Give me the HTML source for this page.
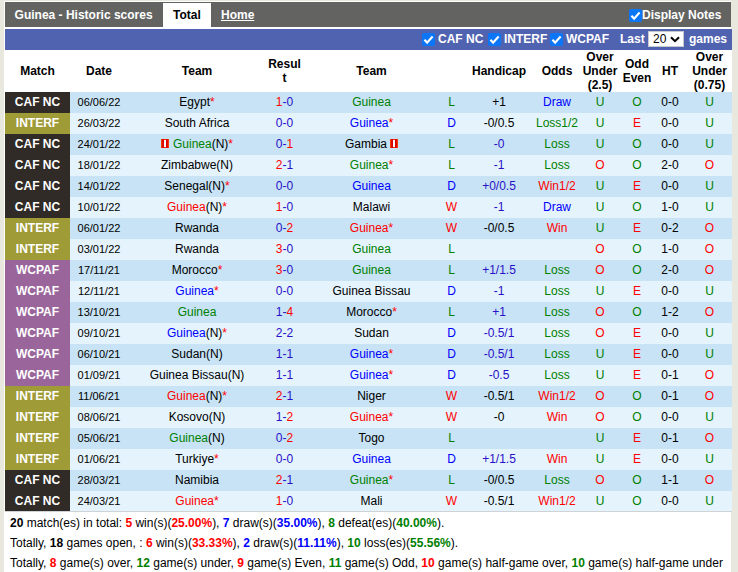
<!DOCTYPE html>
<html><head><meta charset="utf-8"><style>
html,body{margin:0;padding:0;}
body{width:738px;height:572px;overflow:hidden;background:#e8e8df;font-family:"Liberation Sans",sans-serif;font-size:12px;color:#000;position:relative;}
#wrap{position:absolute;left:4px;top:1px;width:727px;height:580px;background:#fff;}
#tbar{position:absolute;left:5px;top:2px;width:726px;height:25px;background:#636462;}
#ttl{position:absolute;left:9.6px;top:6px;color:#fff;font-weight:bold;font-size:12px;line-height:14px;}
#tab{position:absolute;left:158px;top:1px;width:48px;height:26px;background:#fff;}
#tab span{position:absolute;left:10px;top:5px;color:#000;font-weight:bold;line-height:14px;}
#home{position:absolute;left:216px;top:6px;color:#fff;font-weight:bold;text-decoration:underline;line-height:14px;}
#dn{position:absolute;left:637px;top:6px;color:#fff;font-weight:bold;line-height:14px;}
.cb{position:absolute;width:13px;height:13px;}
#bbar{position:absolute;left:5px;top:29px;width:727px;height:21px;background:#5063b1;color:#fff;font-weight:bold;}
#bbar span{position:absolute;top:3px;line-height:14px;}
#sel{position:absolute;left:643px;top:2px;width:34px;height:14px;background:#fff;border:1px solid #c8c8d0;}
#sel b{position:absolute;left:4px;top:0px;color:#000;font-weight:normal;font-size:12px;line-height:14px;}
table{position:absolute;left:5px;top:50px;width:727px;border-collapse:collapse;table-layout:fixed;}
td,th{padding:0;text-align:center;white-space:nowrap;overflow:visible;}
th{height:42px;font-weight:bold;color:#000;line-height:14px;background:#fff;}
td{height:20px;line-height:14px;padding-bottom:1px;}
tr.a td{background:#c7e3f5;}
tr.c td{background:#e4f3fc;}
tr.last td{height:19px;border-bottom:1px solid #d0d3d6;}
td.dt{font-size:11px;}
td.lg{color:#fff;font-weight:bold;}
tr td.caf{background:#302b26;}
tr td.int{background:#9f9b37;}
tr td.wc{background:#9a659b;}
.r{color:#ff0000;} .g{color:#008000;} .b{color:#0000ff;} .k{color:#000;}
.st{color:#ff0000;}
.sc{color:#2a10c8;}
.hb{color:#2a10c8;} .hk{color:#000;}
.rc{display:inline-block;width:8px;height:9px;background:linear-gradient(to right,#ff5000 0,#e01000 1.5px,#d80000 2.5px,#ff3000 3px,#ff3000 5px,#d80000 5.5px,#e01000 6.5px,#ff5000 8px);position:relative;vertical-align:0px;}
.rc:after{content:"";position:absolute;left:3px;top:1px;width:2px;height:7px;background:#fff;}
#foot{position:absolute;left:10px;top:513px;line-height:20px;color:#000;white-space:nowrap;}
#foot b.r{color:#ff0000;} #foot b.b{color:#0000ff;} #foot b.g{color:#008000;}
</style></head><body>
<div id="wrap"></div>
<div id="tbar">
<div id="ttl">Guinea - Historic scores</div>
<div id="tab"><span>Total</span></div>
<div id="home">Home</div>
<svg class="cb" style="left:624px;top:7px" viewBox="0 0 13 13"><rect x="0" y="0" width="13" height="13" rx="2" fill="#0b76f8"/><path d="M2.4 6.8 L5.1 9.6 L10.6 3.5" stroke="#fff" stroke-width="2.1" fill="none"/></svg>
<div id="dn">Display Notes</div>
</div>
<div id="bbar">
<svg class="cb" style="left:417px;top:4px" viewBox="0 0 13 13"><rect x="0" y="0" width="13" height="13" rx="2" fill="#0b76f8"/><path d="M2.4 6.8 L5.1 9.6 L10.6 3.5" stroke="#fff" stroke-width="2.1" fill="none"/></svg><span style="left:433px">CAF NC</span>
<svg class="cb" style="left:483px;top:4px" viewBox="0 0 13 13"><rect x="0" y="0" width="13" height="13" rx="2" fill="#0b76f8"/><path d="M2.4 6.8 L5.1 9.6 L10.6 3.5" stroke="#fff" stroke-width="2.1" fill="none"/></svg><span style="left:499px">INTERF</span>
<svg class="cb" style="left:545px;top:4px" viewBox="0 0 13 13"><rect x="0" y="0" width="13" height="13" rx="2" fill="#0b76f8"/><path d="M2.4 6.8 L5.1 9.6 L10.6 3.5" stroke="#fff" stroke-width="2.1" fill="none"/></svg><span style="left:561px">WCPAF</span>
<span style="left:615px">Last</span>
<div id="sel"><b>20</b><svg style="position:absolute;left:21px;top:4px" width="10" height="7" viewBox="0 0 10 7"><path d="M1 1.2 L5 5.2 L9 1.2" stroke="#000" stroke-width="2" fill="none"/></svg></div>
<span style="left:684px">games</span>
</div>
<table>
<colgroup><col style="width:65px"><col style="width:58px"><col style="width:138px"><col style="width:37px"><col style="width:137px"><col style="width:23px"><col style="width:72px"><col style="width:44px"><col style="width:42px"><col style="width:32px"><col style="width:34px"><col style="width:45px"></colgroup>
<tr><th>Match</th><th>Date</th><th>Team</th><th>Resul<br>t</th><th>Team</th><th></th><th>Handicap</th><th>Odds</th><th>Over<br>Under<br>(2.5)</th><th>Odd<br>Even</th><th>HT</th><th>Over<br>Under<br>(0.75)</th></tr>
<tr class="a"><td class="lg caf">CAF NC</td><td class="dt">06/06/22</td><td><span class="k">Egypt</span><span class="st">*</span></td><td class="sc"><span class="r">1</span>-0</td><td><span class="g">Guinea</span></td><td class="g">L</td><td class="hc hk">+1</td><td class="b">Draw</td><td class="g">U</td><td class="g">O</td><td>0-0</td><td class="g">U</td></tr>
<tr class="c"><td class="lg int">INTERF</td><td class="dt">26/03/22</td><td><span class="k">South Africa</span></td><td class="sc">0-0</td><td><span class="b">Guinea</span><span class="st">*</span></td><td class="b">D</td><td class="hc hk">-0/0.5</td><td class="g">Loss1/2</td><td class="g">U</td><td class="r">E</td><td>0-0</td><td class="g">U</td></tr>
<tr class="a"><td class="lg caf">CAF NC</td><td class="dt">24/01/22</td><td><i class="rc" style="margin-right:4px"></i><span class="g">Guinea</span>(N)<span class="st">*</span></td><td class="sc">0-<span class="r">1</span></td><td><span class="k">Gambia</span><i class="rc" style="margin-left:3px"></i></td><td class="g">L</td><td class="hc hb">-0</td><td class="g">Loss</td><td class="g">U</td><td class="g">O</td><td>0-0</td><td class="g">U</td></tr>
<tr class="c"><td class="lg caf">CAF NC</td><td class="dt">18/01/22</td><td><span class="k">Zimbabwe</span>(N)</td><td class="sc"><span class="r">2</span>-1</td><td><span class="g">Guinea</span><span class="st">*</span></td><td class="g">L</td><td class="hc hb">-1</td><td class="g">Loss</td><td class="r">O</td><td class="g">O</td><td>2-0</td><td class="r">O</td></tr>
<tr class="a"><td class="lg caf">CAF NC</td><td class="dt">14/01/22</td><td><span class="k">Senegal</span>(N)<span class="st">*</span></td><td class="sc">0-0</td><td><span class="b">Guinea</span></td><td class="b">D</td><td class="hc hb">+0/0.5</td><td class="r">Win1/2</td><td class="g">U</td><td class="r">E</td><td>0-0</td><td class="g">U</td></tr>
<tr class="c"><td class="lg caf">CAF NC</td><td class="dt">10/01/22</td><td><span class="r">Guinea</span>(N)<span class="st">*</span></td><td class="sc"><span class="r">1</span>-0</td><td><span class="k">Malawi</span></td><td class="r">W</td><td class="hc hb">-1</td><td class="b">Draw</td><td class="g">U</td><td class="g">O</td><td>1-0</td><td class="g">U</td></tr>
<tr class="a"><td class="lg int">INTERF</td><td class="dt">06/01/22</td><td><span class="k">Rwanda</span></td><td class="sc">0-<span class="r">2</span></td><td><span class="r">Guinea</span><span class="st">*</span></td><td class="r">W</td><td class="hc hk">-0/0.5</td><td class="r">Win</td><td class="g">U</td><td class="r">E</td><td>0-2</td><td class="r">O</td></tr>
<tr class="c"><td class="lg int">INTERF</td><td class="dt">03/01/22</td><td><span class="k">Rwanda</span></td><td class="sc"><span class="r">3</span>-0</td><td><span class="g">Guinea</span></td><td class="g">L</td><td class="hc hk"></td><td class="k"></td><td class="r">O</td><td class="g">O</td><td>1-0</td><td class="r">O</td></tr>
<tr class="a"><td class="lg wc">WCPAF</td><td class="dt">17/11/21</td><td><span class="k">Morocco</span><span class="st">*</span></td><td class="sc"><span class="r">3</span>-0</td><td><span class="g">Guinea</span></td><td class="g">L</td><td class="hc hb">+1/1.5</td><td class="g">Loss</td><td class="r">O</td><td class="g">O</td><td>2-0</td><td class="r">O</td></tr>
<tr class="c"><td class="lg wc">WCPAF</td><td class="dt">12/11/21</td><td><span class="b">Guinea</span><span class="st">*</span></td><td class="sc">0-0</td><td><span class="k">Guinea Bissau</span></td><td class="b">D</td><td class="hc hb">-1</td><td class="g">Loss</td><td class="g">U</td><td class="r">E</td><td>0-0</td><td class="g">U</td></tr>
<tr class="a"><td class="lg wc">WCPAF</td><td class="dt">13/10/21</td><td><span class="g">Guinea</span></td><td class="sc">1-<span class="r">4</span></td><td><span class="k">Morocco</span><span class="st">*</span></td><td class="g">L</td><td class="hc hb">+1</td><td class="g">Loss</td><td class="r">O</td><td class="g">O</td><td>1-2</td><td class="r">O</td></tr>
<tr class="c"><td class="lg wc">WCPAF</td><td class="dt">09/10/21</td><td><span class="b">Guinea</span>(N)<span class="st">*</span></td><td class="sc">2-2</td><td><span class="k">Sudan</span></td><td class="b">D</td><td class="hc hb">-0.5/1</td><td class="g">Loss</td><td class="r">O</td><td class="r">E</td><td>0-0</td><td class="g">U</td></tr>
<tr class="a"><td class="lg wc">WCPAF</td><td class="dt">06/10/21</td><td><span class="k">Sudan</span>(N)</td><td class="sc">1-1</td><td><span class="b">Guinea</span><span class="st">*</span></td><td class="b">D</td><td class="hc hb">-0.5/1</td><td class="g">Loss</td><td class="g">U</td><td class="r">E</td><td>0-0</td><td class="g">U</td></tr>
<tr class="c"><td class="lg wc">WCPAF</td><td class="dt">01/09/21</td><td><span class="k">Guinea Bissau</span>(N)</td><td class="sc">1-1</td><td><span class="b">Guinea</span><span class="st">*</span></td><td class="b">D</td><td class="hc hb">-0.5</td><td class="g">Loss</td><td class="g">U</td><td class="r">E</td><td>0-1</td><td class="r">O</td></tr>
<tr class="a"><td class="lg int">INTERF</td><td class="dt">11/06/21</td><td><span class="r">Guinea</span>(N)<span class="st">*</span></td><td class="sc"><span class="r">2</span>-1</td><td><span class="k">Niger</span></td><td class="r">W</td><td class="hc hk">-0.5/1</td><td class="r">Win1/2</td><td class="r">O</td><td class="g">O</td><td>0-1</td><td class="r">O</td></tr>
<tr class="c"><td class="lg int">INTERF</td><td class="dt">08/06/21</td><td><span class="k">Kosovo</span>(N)</td><td class="sc">1-<span class="r">2</span></td><td><span class="r">Guinea</span><span class="st">*</span></td><td class="r">W</td><td class="hc hk">-0</td><td class="r">Win</td><td class="r">O</td><td class="g">O</td><td>0-0</td><td class="g">U</td></tr>
<tr class="a"><td class="lg int">INTERF</td><td class="dt">05/06/21</td><td><span class="g">Guinea</span>(N)</td><td class="sc">0-<span class="r">2</span></td><td><span class="k">Togo</span></td><td class="g">L</td><td class="hc hk"></td><td class="k"></td><td class="g">U</td><td class="r">E</td><td>0-1</td><td class="r">O</td></tr>
<tr class="c"><td class="lg int">INTERF</td><td class="dt">01/06/21</td><td><span class="k">Turkiye</span><span class="st">*</span></td><td class="sc">0-0</td><td><span class="b">Guinea</span></td><td class="b">D</td><td class="hc hb">+1/1.5</td><td class="r">Win</td><td class="g">U</td><td class="r">E</td><td>0-0</td><td class="g">U</td></tr>
<tr class="a"><td class="lg caf">CAF NC</td><td class="dt">28/03/21</td><td><span class="k">Namibia</span></td><td class="sc"><span class="r">2</span>-1</td><td><span class="g">Guinea</span><span class="st">*</span></td><td class="g">L</td><td class="hc hk">-0/0.5</td><td class="g">Loss</td><td class="r">O</td><td class="g">O</td><td>1-1</td><td class="r">O</td></tr>
<tr class="c last"><td class="lg caf">CAF NC</td><td class="dt">24/03/21</td><td><span class="r">Guinea</span><span class="st">*</span></td><td class="sc"><span class="r">1</span>-0</td><td><span class="k">Mali</span></td><td class="r">W</td><td class="hc hk">-0.5/1</td><td class="r">Win1/2</td><td class="g">U</td><td class="g">O</td><td>0-0</td><td class="g">U</td></tr>
</table>
<div id="foot">
<b>20</b> match(es) in total: <b class="r">5</b> win(s)(<b class="r">25.00%</b>), <b class="b">7</b> draw(s)(<b class="b">35.00%</b>), <b class="g">8</b> defeat(es)(<b class="g">40.00%</b>).<br>
Totally, <b>18</b> games open, : <b class="r">6</b> win(s)(<b class="r">33.33%</b>), <b class="b">2</b> draw(s)(<b class="b">11.11%</b>), <b class="g">10</b> loss(es)(<b class="g">55.56%</b>).<br>
Totally, <b class="r">8</b> game(s) over, <b class="g">12</b> game(s) under, <b class="r">9</b> game(s) Even, <b class="g">11</b> game(s) Odd, <b class="r">10</b> game(s) half-game over, <b class="g">10</b> game(s) half-game under
</div>
</body></html>
